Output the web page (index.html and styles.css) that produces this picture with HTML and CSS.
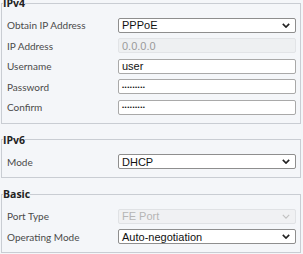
FILE: index.html
```html
<!DOCTYPE html>
<html lang="en">
<head>
    <meta charset="UTF-8">
    <meta name="viewport" content="width=device-width, initial-scale=1.0">
    <title>Network Settings</title>
    <link rel="stylesheet" href="styles.css">
</head>
<body>
    <div class="page">
        <!-- IPv4 -->
        <fieldset class="group first">
            <legend>IPv4</legend>
            <div class="row">
                <label>Obtain IP Address</label>
                <div class="select"><span>PPPoE</span><svg viewBox="0 0 10 6"><path d="M1 1 L5 5 L9 1" /></svg></div>
            </div>
            <div class="row">
                <label>IP Address</label>
                <div class="field disabled">0.0.0.0</div>
            </div>
            <div class="row">
                <label>Username</label>
                <div class="field">user</div>
            </div>
            <div class="row">
                <label>Password</label>
                <div class="field dots">&bull;&bull;&bull;&bull;&bull;&bull;&bull;&bull;&bull;</div>
            </div>
            <div class="row">
                <label>Confirm</label>
                <div class="field dots">&bull;&bull;&bull;&bull;&bull;&bull;&bull;&bull;&bull;</div>
            </div>
        </fieldset>

        <!-- IPv6 -->
        <fieldset class="group">
            <legend>IPv6</legend>
            <div class="row">
                <label>Mode</label>
                <div class="select"><span>DHCP</span><svg viewBox="0 0 10 6"><path d="M1 1 L5 5 L9 1" /></svg></div>
            </div>
        </fieldset>

        <!-- Basic -->
        <fieldset class="group">
            <legend>Basic</legend>
            <div class="row">
                <label>Port Type</label>
                <div class="select disabled"><span>FE Port</span><svg viewBox="0 0 10 6"><path d="M1 1 L5 5 L9 1" /></svg></div>
            </div>
            <div class="row">
                <label>Operating Mode</label>
                <div class="select"><span>Auto-negotiation</span><svg viewBox="0 0 10 6"><path d="M1 1 L5 5 L9 1" /></svg></div>
            </div>
        </fieldset>
    </div>
</body>
</html>
```

FILE: styles.css
```css
/* Global Styles */
body {
    margin: 0;
    padding: 0;
    background-color: #f4f6f9;
    font-family: 'Lato', 'Open Sans', sans-serif;
    color: #4a4a4a;
    font-size: 10px;
    overflow: hidden;
}

.page {
    padding: 0 2px 0 1px;
}

/* Fieldset groups */
.group {
    margin: 0 0 9px 0;
    padding: 5px 4px 5px 5px;
    border: 1px solid #c9cdd3;
    min-width: 0;
}

.group.first {
    margin-top: -4px;
}

legend {
    padding: 0;
    margin-left: -4px;
    font-family: 'Open Sans', sans-serif;
    font-weight: bold;
    font-size: 10.5px;
    line-height: 14px;
    color: #222;
}

/* Form rows */
.row {
    display: flex;
    align-items: center;
    height: 20.5px;
}

label {
    width: 111px;
    flex: none;
}

.field, .select {
    flex: 1;
    height: 13px;
    border: 1px solid #a9a9a9;
    border-radius: 2px;
    background-color: #fff;
    font-family: 'Liberation Sans', Arial, sans-serif;
    font-size: 11px;
    color: #111;
    padding: 0 3px;
    display: flex;
    align-items: center;
}

.field.disabled {
    background-color: #eef0f2;
    border-color: #e2e4e7;
    color: #9a9a9a;
}

.dots {
    font-size: 6px;
    letter-spacing: 0.5px;
}

.select {
    justify-content: space-between;
    border-color: #8e8e8e;
}

.select svg {
    width: 8px;
    height: 5px;
    margin-right: 2px;
}

.select path {
    fill: none;
    stroke: #222;
    stroke-width: 2;
}

.select.disabled {
    background-color: #f0f1f3;
    border-color: #e0e2e5;
    color: #b5b5b5;
}

.select.disabled path {
    stroke: #c0c0c0;
    stroke-width: 1.4;
}
```
